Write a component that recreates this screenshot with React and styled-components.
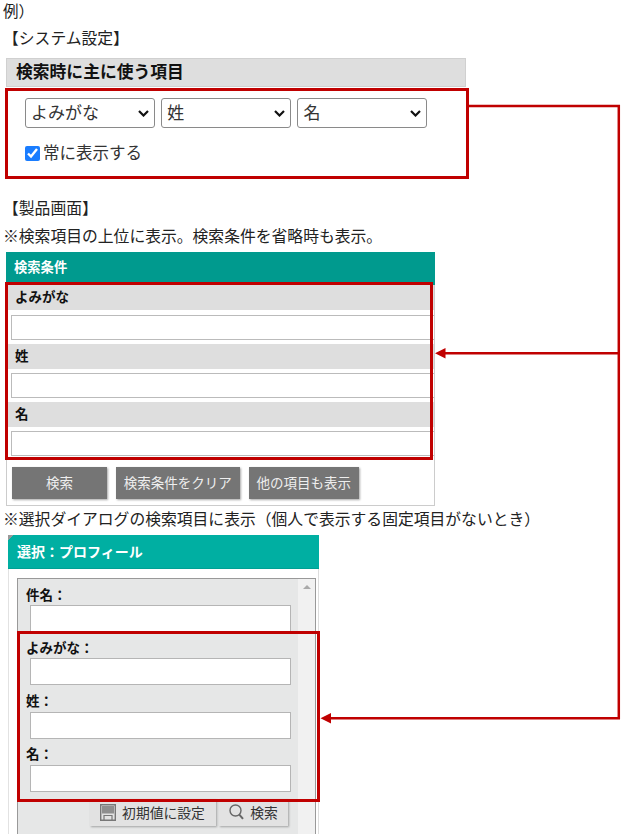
import React from "react";
import styled, { createGlobalStyle } from "styled-components";

const GlobalStyle = createGlobalStyle`
    html, body {
        margin: 0;
        background: #fff;
    }
    body {
        font-family: "Noto Sans CJK JP", "Noto Sans", sans-serif;
        color: #222;
    }
`;

function Select({ value }) {
    return (
        <SelectWrap>
            <NameSelect defaultValue={value}>
                <option>{value}</option>
            </NameSelect>
            <Chevron width="11" height="7" viewBox="0 0 11 7" fill="none">
                <path d="M1 1l4.500 4.500L10 1" stroke="#111" strokeWidth="2.200" />
            </Chevron>
        </SelectWrap>
    );
}

export default function App() {
    return (
        <Page>
            <GlobalStyle />
            <FirstLine $top={0}>例）</FirstLine>
            <Line $top={8}>【システム設定】</Line>

            <SettingBox>
                <SettingHead>検索時に主に使う項目</SettingHead>
                <SelectRow>
                    <Select value="よみがな" />
                    <Select value="姓" />
                    <Select value="名" />
                </SelectRow>
                <CheckLabel>
                    <input type="checkbox" defaultChecked />
                    常に表示する
                </CheckLabel>
            </SettingBox>

            <Line $top={34}>【製品画面】</Line>
            <Line $top={8}>※検索項目の上位に表示。検索条件を省略時も表示。</Line>

            <SearchPanel>
                <SearchHead>検索条件</SearchHead>
                {["よみがな", "姓", "名"].map((label) => (
                    <div key={label}>
                        <RowLabel>{label}</RowLabel>
                        <RowField>
                            <RowInput />
                        </RowField>
                    </div>
                ))}
                <ButtonRow>
                    <GreyButton $width={95}>検索</GreyButton>
                    <GreyButton $width={123.5}>検索条件をクリア</GreyButton>
                    <GreyButton $width={110.5}>他の項目も表示</GreyButton>
                </ButtonRow>
            </SearchPanel>

            <Line $top={3}>※選択ダイアログの検索項目に表示（個人で表示する固定項目がないとき）</Line>

            <Dialog>
                <DialogHead>選択：プロフィール</DialogHead>
                <DialogBody>
                    <ScrollPane>
                        <Fields>
                            {["件名：", "よみがな：", "姓：", "名："].map((label) => (
                                <div key={label}>
                                    <FieldLabel>{label}</FieldLabel>
                                    <FieldInput />
                                </div>
                            ))}
                            <DialogActions>
                                <LightButton $width={126}>
                                    <svg width="16" height="17" viewBox="0 0 16 17" fill="none">
                                        <path d="M.7.7h14.600v15.600H.7z" stroke="#777" strokeWidth="1.400" />
                                        <path d="M2 2h12v7.500H2z" fill="#8e8e8e" />
                                        <path d="M4 16v-4.500h8V16" stroke="#777" strokeWidth="1.200" />
                                    </svg>
                                    初期値に設定
                                </LightButton>
                                <LightButton $width={69}>
                                    <svg width="15" height="16" viewBox="0 0 15 16" fill="none" stroke="#666">
                                        <circle cx="6.500" cy="6.500" r="5.500" strokeWidth="1.400" />
                                        <path d="M10.500 10.800l3.500 4" strokeWidth="2" />
                                    </svg>
                                    検索
                                </LightButton>
                            </DialogActions>
                        </Fields>
                        <ScrollTrack>
                            <ScrollArrow />
                        </ScrollTrack>
                    </ScrollPane>
                </DialogBody>
            </Dialog>

            <RedFrame $left={5} $top={88} $width={464} $height={91} />
            <RedFrame $left={5} $top={282} $width={428} $height={178} />
            <RedFrame $left={17} $top={631} $width={303} $height={171} />

            <Connector width="623" height="840" viewBox="0 0 623 840" fill="none">
                <path d="M469 106H618.800V718.300H330" stroke="#c00000" strokeWidth="2.500" />
                <path d="M618 353.300H445" stroke="#c00000" strokeWidth="2.500" />
                <path d="M435 353.300l10.500-5.300v10.600z" fill="#c00000" />
                <path d="M320.500 718.300l10.500-5.300v10.600z" fill="#c00000" />
            </Connector>
        </Page>
    );
}

const Page = styled.div`
    position: relative;
    width: 623px;
    height: 840px;
    overflow: hidden;
    padding-left: 3px;
    box-sizing: border-box;
`;

const Line = styled.div`
    margin-top: ${(p) => p.$top}px;
    font-size: 15.800px;
    line-height: 20px;
    white-space: nowrap;
`;

const FirstLine = styled(Line)`
    font-size: 15.500px;
`;

const SettingBox = styled.div`
    width: 460px;
    margin: 10px 0 0 3px;
`;

const SettingHead = styled.div`
    height: 29px;
    padding-left: 9px;
    box-sizing: border-box;
    background: #dedede;
    border: 1px solid #d0d0d0;
    font-size: 16.800px;
    font-weight: 700;
    line-height: 24px;
    color: #111;
`;

const SelectRow = styled.div`
    display: flex;
    gap: 6.700px;
    margin: 11px 0 0 19px;
`;

const SelectWrap = styled.div`
    position: relative;
    width: 129.500px;
    height: 30px;
`;

const NameSelect = styled.select`
    appearance: none;
    display: block;
    width: 100%;
    height: 100%;
    padding: 0 0 3px 5px;
    font-family: inherit;
    font-size: 17px;
    color: #333;
    background: #fff;
    border: 1px solid #8a8a8a;
    border-radius: 3px;
`;

const Chevron = styled.svg`
    position: absolute;
    right: 6px;
    top: 12px;
    pointer-events: none;
`;

const CheckLabel = styled.label`
    display: flex;
    align-items: center;
    height: 24px;
    margin: 12px 0 0 19px;
    font-size: 16.500px;
    color: #333;

    input {
        width: 15px;
        height: 15px;
        margin: 3px 3px 0 0;
        accent-color: #1a7dff;
    }
`;

const SearchPanel = styled.div`
    width: 429px;
    height: 254px;
    margin: 6px 0 0 3px;
    box-sizing: border-box;
    border: 1px solid #ccc;
    border-top: 0;
`;

const SearchHead = styled.div`
    height: 33.300px;
    margin: 0 -1px;
    padding-left: 8px;
    background: #009a8e;
    color: #fff;
    font-size: 13.300px;
    font-weight: 700;
    line-height: 29px;
`;

const RowLabel = styled.div`
    height: 25px;
    padding-left: 8px;
    background: #dedede;
    font-size: 13.500px;
    font-weight: 700;
    line-height: 23px;
    color: #111;
`;

const RowField = styled.div`
    height: 33.300px;
    padding: 4.500px 0 0 4px;
    box-sizing: border-box;
`;

const RowInput = styled.input`
    display: block;
    width: 100%;
    height: 25px;
    padding: 0;
    box-sizing: border-box;
    border: 1px solid #bbb;
    border-right: 0;
    background: #fff;
`;

const ButtonRow = styled.div`
    display: flex;
    gap: 9px;
    margin: 6.800px 0 0 5px;
`;

const GreyButton = styled.div`
    width: ${(p) => p.$width}px;
    height: 32px;
    background: #757575;
    color: #eee;
    font-size: 13.500px;
    line-height: 31px;
    text-align: center;
    box-shadow: 1px 1px 2px rgba(0, 0, 0, 0.35);
`;

const Dialog = styled.div`
    width: 311px;
    height: 299px;
    margin: 6px 0 0 5px;
    box-sizing: border-box;
`;

const DialogHead = styled.div`
    height: 34px;
    padding-left: 9px;
    background: linear-gradient(135deg, #999 4px, #00afa2 4px);
    color: #fff;
    font-size: 14px;
    font-weight: 700;
    line-height: 33px;
    border-bottom: 1px solid #00a094;
    box-sizing: border-box;
`;

const DialogBody = styled.div`
    height: 265px;
    padding: 9px 2px 0 8px;
    box-sizing: border-box;
    border-left: 1px solid #e2e2e2;
    border-right: 1px solid #ddd;
`;

const ScrollPane = styled.div`
    display: flex;
    height: 256px;
    box-sizing: border-box;
    border: 1px solid #999;
    border-bottom: 0;
    background: #e6e7e7;
`;

const Fields = styled.div`
    flex: 1;
    padding: 6.500px 8px 0 8px;
    overflow: hidden;
`;

const FieldLabel = styled.div`
    height: 19px;
    margin-bottom: 0.500px;
    font-size: 13.500px;
    font-weight: 700;
    line-height: 16px;
    color: #111;
`;

const FieldInput = styled.input`
    display: block;
    width: 260.500px;
    height: 27px;
    margin: 0 0 6.800px 4px;
    padding: 0;
    box-sizing: border-box;
    border: 1px solid #b5b5b5;
    background: #fff;
`;

const DialogActions = styled.div`
    display: flex;
    justify-content: flex-end;
    gap: 3.500px;
    margin-top: 1px;
    padding-right: 2px;
`;

const LightButton = styled.div`
    display: flex;
    align-items: center;
    justify-content: center;
    gap: 6px;
    width: ${(p) => p.$width}px;
    height: 27px;
    background: #e2e2e2;
    color: #333;
    font-size: 13.800px;
    box-shadow: 1px 1px 2px rgba(0, 0, 0, 0.3);
`;

const ScrollTrack = styled.div`
    flex: none;
    width: 17px;
    background: #f1f1f1;
`;

const ScrollArrow = styled.div`
    width: 0;
    height: 0;
    margin: 6px auto 0;
    border-left: 4px solid transparent;
    border-right: 4px solid transparent;
    border-bottom: 4px solid #aaa;
`;

const RedFrame = styled.div`
    position: absolute;
    left: ${(p) => p.$left}px;
    top: ${(p) => p.$top}px;
    width: ${(p) => p.$width}px;
    height: ${(p) => p.$height}px;
    box-sizing: border-box;
    border: 3px solid #c00000;
    pointer-events: none;
`;

const Connector = styled.svg`
    position: absolute;
    left: 0;
    top: 0;
    pointer-events: none;
`;
